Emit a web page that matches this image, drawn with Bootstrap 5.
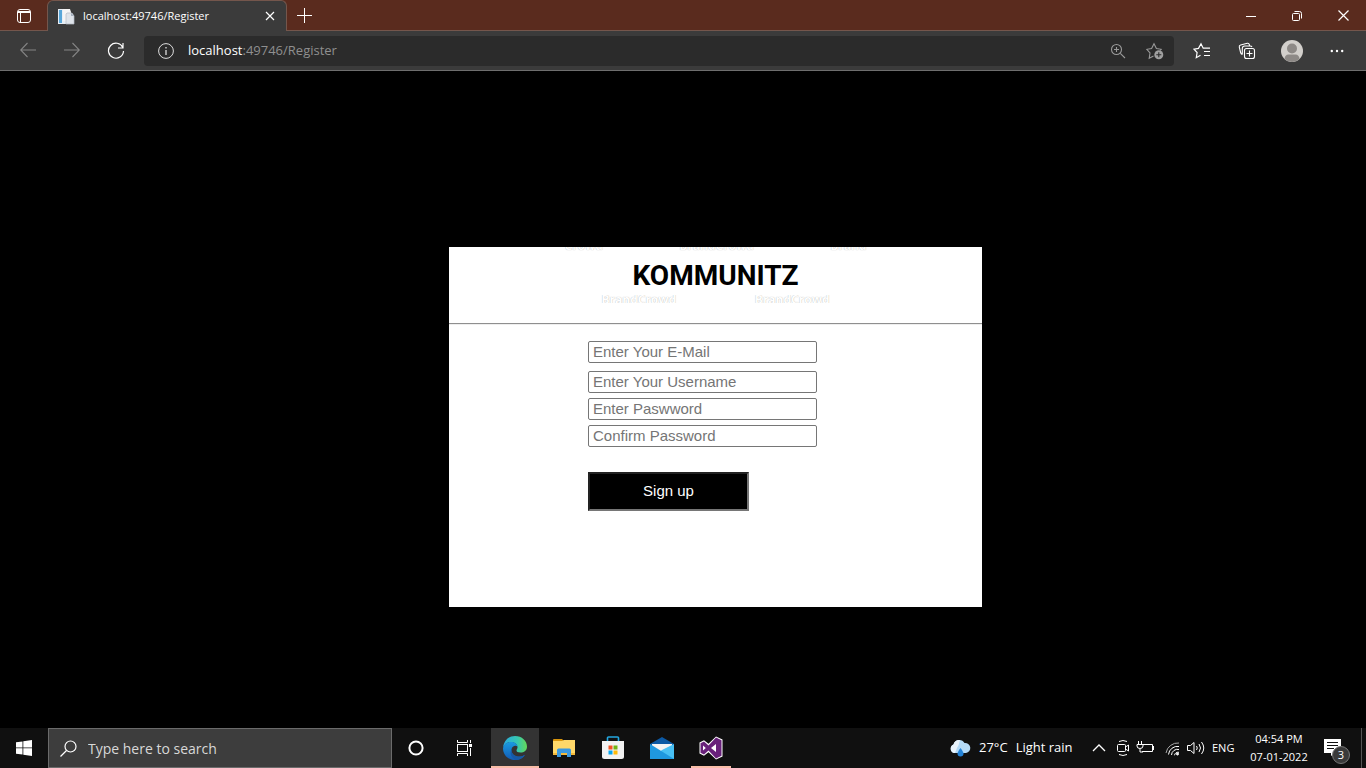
<!DOCTYPE html>
<html lang="en">
<head>
<meta charset="utf-8">
<meta name="viewport" content="width=device-width, initial-scale=1">
<title>localhost:49746/Register</title>
<link href="https://cdn.jsdelivr.net/npm/bootstrap@5.3.0/dist/css/bootstrap.min.css" rel="stylesheet">
<style>
  body { background: #000; font-family: "Open Sans", "Noto Sans", sans-serif; font-size: 12px; color: #fff; overflow: hidden; }
  button { background: none; border: 0; padding: 0; color: inherit; }
  svg { display: block; flex: none; }

  .tabstrip { height: 31px; background: #5a2b1e; box-shadow: inset 0 -1px #74564c; }
  .tab-menu { width: 47px; }
  .page-tab { width: 240px; background: #3b3b3b; border: 1px solid #74564c; border-bottom: 0; border-radius: 6px 6px 0 0; padding: 0 10px; }
  .page-tab span { font-size: 11px; }
  .new-tab { width: 35px; }
  .win-btn { width: 46px; }

  .toolbar { height: 40px; background: #3b3b3b; border-bottom: 1px solid #6e6e6e; }
  .tool-btn { width: 44px; }
  .nav-btns { padding-left: 6px; width: 144px; }
  .address { height: 30px; background: #2b2b2b; border-radius: 4px; padding: 0 10px 0 14px; }
  .url { font-size: 13px; color: #8f8f8f; padding-left: 14px; }
  .url b { font-weight: 400; color: #fff; }
  .side-btns { width: 192px; padding-left: 6px; gap: 1px; }

  .stage { padding: 55px 0 0 65px; }
  .panel { width: 533px; min-height: 360px; background: #fff; color: #000; font-family: "Liberation Sans", Arial, sans-serif; }
  .brand { width: 302px; }
  .wm { overflow: hidden; font: 700 12px/10px "Open Sans", sans-serif; color: #fff; text-shadow: 0 0 1px #aaa; }
  .wm-top { height: 4px; }
  .wm-bottom { height: 8px; padding: 0 37px; }
  .wordmark { font: 700 28px/38px Roboto, sans-serif; text-align: center; margin: 0; padding-top: 6px; color: #000; }
  .rule { margin: 20px 0 16px; border-top: 1px solid #8f8f8f; border-bottom: 1px solid #eee; opacity: 1; }
  .signup { width: 229px; margin-left: 139px; gap: 5px; }
  .signup input { height: 22px; border: 1px solid #767676; border-radius: 2px; padding: 0 4px; font-size: 15px; background: #fff; }
  .signup .email { margin-bottom: 3px; }
  .signup input::placeholder { color: #757575; }
  .signup .go { width: 161px; height: 39px; margin-top: 20px; background: #000; color: #fff; border: 2px solid; border-color: #222 #767676 #767676 #222; font-size: 15px; }

  .taskbar { height: 40px; background: #101010; }
  .start { width: 48px; }
  .search { width: 344px; background: #3d3d3d; border: 1px solid #6b6b6b; padding: 0 11px; }
  .search input { background: none; border: 0; color: #fff; font-size: 14px; outline: 0; padding: 0; margin-left: 11px; }
  .search input::placeholder { color: #d8d8d8; opacity: 1; }
  .task { width: 48px; }
  .apps { gap: 1px; padding-left: 3px; }
  .task.current { background: #333; border-bottom: 2px solid #f9bda8; padding-top: 2px; }
  .task.open-app { width: 40px; margin: 0 4px; border-bottom: 2px solid #f9bda8; padding-top: 2px; }
  .tray { gap: 7px; }
  .weather { font-size: 13px; width: 132px; }
  .clock { width: 60px; font-size: 11px; line-height: 18px; text-align: center; }
  .lang { font-size: 11px; width: 26px; }
  .notice { width: 26px; }
  .count { right: 0; bottom: 4px; width: 18px; height: 18px; border: 1px solid #777; border-radius: 50%; background: #3a3a3a; font-size: 11px; line-height: 16px; text-align: center; }
  .peek { width: 5px; border-left: 1px solid #555; }
</style>
</head>
<body class="d-flex flex-column vh-100">

<header>
  <div class="tabstrip d-flex">
    <button class="tab-menu d-flex align-items-center justify-content-center" aria-label="Tab actions">
      <svg width="16" height="16" viewBox="0 0 16 16" fill="none" stroke="#fff"><rect x="1.500" y="1.500" width="13" height="13" rx="2.500"/><path d="M2 3.500h12M2 4.500h12M4.500 5v9"/></svg>
    </button>
    <div class="page-tab d-flex align-items-center">
      <svg width="17" height="17" viewBox="0 0 17 17"><path d="M0 1h9v15H0z" fill="#e7eef5"/><path d="M1 2h3v13H1z" fill="#58a6d8"/><path d="M5 1h7l1 3v9H5z" fill="#f5f5f5"/><path d="M9 5h5l2 3v8H8V6z" fill="#dfe4ea" stroke="#b5bcc5" stroke-width=".7"/><path d="M13 5v3h3" fill="#a6b0bd"/></svg>
      <span class="flex-grow-1 ps-2 text-nowrap">localhost:49746/Register</span>
      <button aria-label="Close tab"><svg width="12" height="12" viewBox="0 0 12 12" stroke="#fff" stroke-width="1.200"><path d="M2 2l8 8M10 2l-8 8"/></svg></button>
    </div>
    <button class="new-tab d-flex align-items-center justify-content-center" aria-label="New tab"><svg width="15" height="15" viewBox="0 0 15 15" stroke="#fff"><path d="M7.500 0v15M0 7.500h15"/></svg></button>
    <div class="d-flex ms-auto">
      <button class="win-btn d-flex align-items-center justify-content-center" aria-label="Minimize"><svg width="10" height="10" viewBox="0 0 10 10" stroke="#fff"><path d="M0 5.500h10"/></svg></button>
      <button class="win-btn d-flex align-items-center justify-content-center" aria-label="Restore"><svg width="10" height="10" viewBox="0 0 10 10" fill="none" stroke="#fff"><rect x=".5" y="2.500" width="7" height="7" rx="1"/><path d="M2.500 .5h5q2 0 2 2v5"/></svg></button>
      <button class="win-btn d-flex align-items-center justify-content-center" aria-label="Close"><svg width="11" height="11" viewBox="0 0 11 11" stroke="#fff" stroke-width="1.200"><path d="M.5 .5l10 10M10.500 .5l-10 10"/></svg></button>
    </div>
  </div>

  <div class="toolbar d-flex align-items-center">
    <div class="nav-btns d-flex">
      <button class="tool-btn d-flex justify-content-center" aria-label="Back"><svg width="16" height="16" viewBox="0 0 16 16" fill="none" stroke="#858585" stroke-width="1.100"><path d="M16 8H.7M7.500 1L.7 8l6.800 7"/></svg></button>
      <button class="tool-btn d-flex justify-content-center" aria-label="Forward"><svg width="16" height="16" viewBox="0 0 16 16" fill="none" stroke="#858585" stroke-width="1.100"><path d="M0 8h15.300M8.500 1l6.800 7-6.800 7"/></svg></button>
      <button class="tool-btn d-flex justify-content-center" aria-label="Refresh"><svg width="18" height="18" viewBox="0 0 18 18" fill="none" stroke="#fff" stroke-width="1.200"><path d="M15.800 5.500A7.500 7.500 0 1 0 16.500 9M16 1v5h-5"/></svg></button>
    </div>
    <div class="address d-flex align-items-center flex-grow-1">
      <svg width="16" height="16" viewBox="0 0 16 16" fill="none" stroke="#ddd"><circle cx="8" cy="8" r="7.400"/><path d="M8 7v5M8 4v1.500" stroke-width="1.300"/></svg>
      <a href="#" class="url text-decoration-none flex-grow-1"><b>localhost</b>:49746/Register</a>
      <button aria-label="Zoom"><svg width="16" height="16" viewBox="0 0 16 16" fill="none" stroke="#9a9a9a" stroke-width="1.100"><circle cx="6.500" cy="6.500" r="5"/><path d="M10.300 10.300l4.700 4.700M4 6.500h5M6.500 4v5"/></svg></button>
      <button class="ms-3 ps-1" aria-label="Add to favorites"><svg width="18" height="18" viewBox="0 0 18 18" fill="none" stroke="#9a9a9a" stroke-width="1.100"><path d="M7.500 14l-4.300 2.200.8-5.200L.8 7.300l4.800-.8L8 1.800l2.400 4.700 4.800.8-1 1.200"/><circle cx="12.800" cy="12.800" r="4.500" fill="#a0a0a0" stroke="none"/><path d="M12.800 10.300v5M10.300 12.800h5" stroke="#2b2b2b"/></svg></button>
    </div>
    <div class="side-btns d-flex align-items-center">
      <button class="tool-btn d-flex justify-content-center" aria-label="Favorites"><svg width="18" height="18" viewBox="0 0 18 18" fill="none" stroke="#fff" stroke-width="1.200"><path d="M7.500 13.200l-4.200 2.500.8-5.200L1 7.200l4.500-.8L8 1.800l2.200 4.400h6.800M11 9.500h6M11 13.500h6"/></svg></button>
      <button class="tool-btn d-flex justify-content-center" aria-label="Collections"><svg width="18" height="18" viewBox="0 0 18 18" fill="none" stroke="#fff" stroke-width="1.100"><rect x="6.500" y="6.500" width="10" height="10" rx="2"/><path d="M11.500 8.500v6M8.500 11.500h6M4.300 12.500Q3 12 2.600 10.500L1.300 5.200Q.9 3.500 2.600 3l6.700-1.700q1.500-.3 2 1.200l.2 1M4.300 12.500V6.500q0-2.500 2.500-2.500h5.400q1.300 0 1.800 1"/></svg></button>
      <button class="tool-btn d-flex justify-content-center" aria-label="Profile"><svg width="22" height="22" viewBox="0 0 22 22"><circle cx="11" cy="11" r="11" fill="#d2cfcb"/><circle cx="11" cy="8.500" r="5" fill="#8d8986"/><path d="M3.500 19Q4 14.500 7.500 14.500h7Q18 14.500 18.500 19A11 11 0 0 1 3.500 19" fill="#8d8986"/></svg></button>
      <button class="tool-btn d-flex justify-content-center" aria-label="Settings and more"><svg width="14" height="4" viewBox="0 0 14 4" fill="#fff"><circle cx="1.800" cy="2" r="1.200"/><circle cx="7" cy="2" r="1.200"/><circle cx="12.200" cy="2" r="1.200"/></svg></button>
    </div>
  </div>
</header>

<main class="stage flex-grow-1 d-flex align-items-center justify-content-center">
  <section class="panel">
    <div class="brand mx-auto">
      <div class="wm wm-top d-flex justify-content-between align-items-end"><span>Crowd</span><span>BrandCrowd</span><span>Brand</span></div>
      <h1 class="wordmark">KOMMUNITZ</h1>
      <div class="wm wm-bottom d-flex justify-content-between"><span>BrandCrowd</span><span>BrandCrowd</span></div>
    </div>
    <hr class="rule">
    <form class="signup d-flex flex-column">
      <input type="email" placeholder="Enter Your E-Mail" aria-label="E-mail" class="email">
      <input type="text" placeholder="Enter Your Username" aria-label="Username">
      <input type="password" placeholder="Enter Paswword" aria-label="Password">
      <input type="password" placeholder="Confirm Password" aria-label="Confirm password">
      <button type="button" class="go">Sign up</button>
    </form>
  </section>
</main>

<footer class="taskbar d-flex">
  <button class="start d-flex align-items-center justify-content-center" aria-label="Start"><svg width="16" height="16" viewBox="0 0 16 16" fill="#fff"><path d="M0 2.300l6.500-.9v6.100H0zM7.300 1.300L16 0v7.500H7.300zM0 8.300h6.500v6.200L0 13.700zM7.300 8.300H16V16l-8.700-1.300z"/></svg></button>
  <div class="search d-flex align-items-center">
    <svg width="17" height="17" viewBox="0 0 17 17" fill="none" stroke="#fff" stroke-width="1.200"><circle cx="10.500" cy="6.500" r="5.500"/><path d="M6.500 10.500L.5 16.500"/></svg>
    <input class="flex-grow-1" type="text" placeholder="Type here to search" aria-label="Search">
  </div>
  <button class="task d-flex align-items-center justify-content-center" aria-label="Cortana"><svg width="16" height="16" viewBox="0 0 16 16" fill="none" stroke="#fff" stroke-width="2"><circle cx="8" cy="8" r="6.600"/></svg></button>
  <button class="task d-flex align-items-center justify-content-center" aria-label="Task view"><svg width="17" height="16" viewBox="0 0 17 16" fill="none" stroke="#fff"><path d="M1.500 0v2.500h10V0M1.500 16v-2.500h10V16M14.500 0v3M14.500 8v8"/><rect x="1.500" y="4.500" width="10" height="7"/><path d="M13 4h3v3h-3z" fill="#fff" stroke="none"/></svg></button>
  <div class="apps d-flex">
    <button class="task current d-flex align-items-center justify-content-center" aria-label="Microsoft Edge">
      <svg width="24" height="24" viewBox="0 0 24 24"><defs><linearGradient id="e1" x1="0" x2="1"><stop offset="0" stop-color="#2aa8e0"/><stop offset=".6" stop-color="#36c7b0"/><stop offset="1" stop-color="#64d958"/></linearGradient><linearGradient id="e2" y1="0" y2="1" x2="0"><stop offset="0" stop-color="#1a9ae0"/><stop offset="1" stop-color="#125bb5"/></linearGradient></defs>
        <path d="M0 12C1 4 6 0 12 0c7 0 12 5 12 10.500 0 4-3 6-6.500 6-3 0-4-1-4-2s1-1.500 1-3.200C14.500 8.500 12 6 8 6c-4 0-7 3-8 6z" fill="url(#e1)"/>
        <path d="M0 12c1-4 4-6 8-6 4 0 6 2 6.500 4.500C13 9 9 9.500 8.500 13.500 8 18 12 21 17 20.500c2 0 4-1 5-1.800C20 22 16.500 24 12 24 5 24 0 19 0 12z" fill="url(#e2)"/>
        <path d="M8.500 13c-.5 5 4 8.500 9 7.500 2-.3 3.500-1 4.500-1.800-2 3.300-5 5-8.500 5.200C9 23 6 18 8.500 13z" fill="#1759a6"/></svg>
    </button>
    <button class="task d-flex align-items-center justify-content-center" aria-label="File Explorer"><svg width="22" height="20" viewBox="0 0 22 20"><path d="M0 1.500Q0 1 1 1h8l2 2H0z" fill="#d9950c"/><path d="M0 3h9l2-1h11v15H0z" fill="#ffd869"/><path d="M0 15h22v2H0z" fill="#f4b93a"/><path d="M4 19v-7q0-1.500 1.500-1.500h11Q18 10.500 18 12v7h-4v-4H8v4z" fill="#3b98df"/></svg></button>
    <button class="task d-flex align-items-center justify-content-center" aria-label="Microsoft Store"><svg width="24" height="24" viewBox="0 0 24 24"><path d="M6.500 6V1.800Q6.500 1 7.500 1h9q1 0 1 .8V6" fill="none" stroke="#23a7e0" stroke-width="1.600"/><path d="M1 5h22v15.500Q23 23 20.500 23h-17Q1 23 1 20.500z" fill="#f2f2f2"/><path d="M7.500 9.500h4v4h-4z" fill="#f35325"/><path d="M12.500 9.500h4v4h-4z" fill="#71b515"/><path d="M7.500 14.500h4v4h-4z" fill="#05a6f0"/><path d="M12.500 14.500h4v4h-4z" fill="#ffba08"/></svg></button>
    <button class="task d-flex align-items-center justify-content-center" aria-label="Mail"><svg width="24" height="24" viewBox="0 0 24 24"><path d="M0 8L12 1l12 7v4H0z" fill="#0c59a4"/><path d="M2 8h20v5l-10 5L2 13z" fill="#f3f3f3"/><path d="M24 8v15H0l12-9z" fill="#48c0f4"/><path d="M0 8l24 15H0z" fill="#1f98e0"/></svg></button>
    <button class="task open-app d-flex align-items-center justify-content-center" aria-label="Visual Studio"><svg width="24" height="24" viewBox="0 0 24 24"><path d="M17 .5l6.500 3v17l-6.500 3-7.500-7.300-4.500 3.500-4.500-2.200V6.500L5 4.300l4.500 3.500z" fill="#fff"/><path fill-rule="evenodd" d="M17 1.500l5.500 2.700v15.600L17 22.500l-7.500-8-4.500 4-3.500-1.800V7.300L5 5.500l4.500 4zM17 8l-5 4 5 4zM4 9.500v5L6.800 12z" fill="#68217a"/></svg></button>
  </div>

  <div class="tray d-flex align-items-center ms-auto">
    <button class="weather d-flex align-items-center text-nowrap">
      <svg width="22" height="18" viewBox="0 0 22 18"><path d="M5 14a4.500 4.500 0 0 1-.5-8.500A6 6 0 0 1 15.500 4 5 5 0 0 1 17 14z" fill="#b4dbf8"/><path d="M5 14a4.500 4.500 0 0 1-.5-8.500A6 6 0 0 1 11 1q-1 5-3 8l-2 5z" fill="#e9f4fd"/><path d="M11.500 9q3 4 3 5.500a3 3 0 0 1-6 0q0-1.500 3-5.500z" fill="#2383d8"/></svg>
      <span class="ms-2">27°C</span><span class="ms-2">Light rain</span>
    </button>
    <button class="ms-1" aria-label="Show hidden icons"><svg width="14" height="10" viewBox="0 0 14 10" fill="none" stroke="#fff" stroke-width="1.300"><path d="M1 8l6-6 6 6"/></svg></button>
    <svg class="ms-1" width="12" height="18" viewBox="0 0 12 18" fill="none" stroke="#fff"><rect x=".5" y="5.500" width="8" height="7" rx="1"/><path d="M8.500 8l3-2v6l-3-2M2 2.500q4-2 8 0M2 15.500q4 2 8 0"/></svg>
    <svg class="me-1" width="18" height="14" viewBox="0 0 18 14" fill="none" stroke="#fff"><path d="M7 3.500h9.500v7H6M17.500 5v4M2.500 0v3M5.500 0v3M1 3.500h6v1.500q0 2.500-3 2.500T1 5zM4 8v3h3"/></svg>
    <svg width="15" height="15" viewBox="0 0 15 15" fill="none" stroke="#fff"><path d="M1 12A12 12 0 0 1 14 2" stroke="#aaa"/><path d="M3.500 13.500A9 9 0 0 1 14 5.500M6.500 14A6 6 0 0 1 14 8.500M9.500 14.300a4 4 0 0 1 4.500-3"/><circle cx="12.500" cy="13" r="1" fill="#fff"/></svg>
    <svg width="18" height="14" viewBox="0 0 18 14" fill="none" stroke="#fff"><path d="M.5 4.500h3L7 1.500v11L3.500 9.500h-3zM9.500 5q1.500 2 0 4M12 3q3 4 0 8M14.500 1q4.500 6 0 12"/></svg>
    <span class="lang">ENG</span>
    <div class="clock text-nowrap ms-1"><div>04:54 PM</div><div>07-01-2022</div></div>
    <button class="notice position-relative align-self-stretch ms-2 me-1" aria-label="Notifications, 3 new">
      <svg width="18" height="18" viewBox="0 0 18 18"><path d="M0 0h17v14h-6l-4 3v-3H0z" fill="#fff"/><path d="M3 3.500h11M3 6.500h11M3 9.500h7" stroke="#101010"/></svg>
      <span class="count position-absolute">3</span>
    </button>
    <div class="peek align-self-stretch"></div>
  </div>
</footer>

<script src="https://cdn.jsdelivr.net/npm/bootstrap@5.3.0/dist/js/bootstrap.bundle.min.js"></script>
</body>
</html>
